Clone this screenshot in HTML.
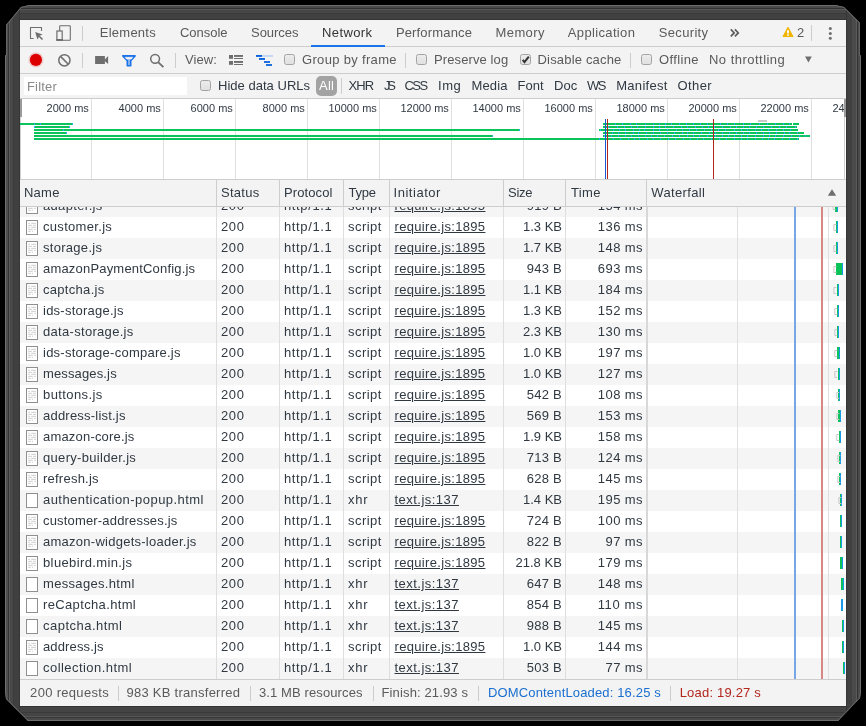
<!DOCTYPE html>
<html><head><meta charset="utf-8">
<style>
*{margin:0;padding:0;box-sizing:border-box}
html,body{width:866px;height:726px;overflow:hidden;background:#000}
body{position:relative;font-family:"Liberation Sans",sans-serif;font-size:13px;color:#303942}
.a{position:absolute;white-space:nowrap}
#wrap{position:absolute;left:0;top:0;width:866px;height:726px;will-change:transform}
#ov{position:absolute;left:0;top:0}
</style></head><body><div id="wrap">

<svg class="a" style="left:0;top:0" width="866" height="726" viewBox="0 0 866 726"><defs><clipPath id="fc"><polygon points="21,7 25,6 31,5 835,5 844,7 860,23 860,55 861,56 861,690 860,698 838,721 28,721 6,699 5,690 5,56 6,55 6,25"/></clipPath></defs><g clip-path="url(#fc)"><rect x="0" y="0" width="866" height="726" fill="#424242"/><rect x="0" y="5" width="866" height="1" fill="#7d7d7d"/><rect x="0" y="6" width="866" height="2" fill="#4a4a4a"/><rect x="0" y="8" width="866" height="1" fill="#343434"/><rect x="0" y="9" width="866" height="1" fill="#565656"/><rect x="0" y="10" width="866" height="3" fill="#474747"/><rect x="0" y="13" width="866" height="1" fill="#3b3b3b"/><rect x="0" y="14" width="866" height="5" fill="#414141"/><rect x="0" y="19" width="866" height="1" fill="#353535"/><rect x="0" y="706" width="866" height="1" fill="#333333"/><rect x="0" y="707" width="866" height="5" fill="#444444"/><rect x="0" y="712" width="866" height="1" fill="#3a3a3a"/><rect x="0" y="713" width="866" height="3" fill="#444444"/><rect x="0" y="716" width="866" height="1" fill="#555555"/><rect x="0" y="717" width="866" height="1" fill="#383838"/><rect x="0" y="718" width="866" height="2" fill="#484848"/><rect x="0" y="720" width="866" height="1" fill="#7a7a7a"/><rect x="0" y="0" width="6" height="726" fill="#858585"/><rect x="6" y="0" width="2" height="726" fill="#4f4f4f"/><rect x="8" y="0" width="1" height="726" fill="#333333"/><rect x="9" y="0" width="1" height="726" fill="#5a5a5a"/><rect x="10" y="0" width="3" height="726" fill="#484848"/><rect x="13" y="0" width="1" height="726" fill="#3c3c3c"/><rect x="14" y="0" width="5" height="726" fill="#404040"/><rect x="19" y="0" width="1" height="726" fill="#363636"/><rect x="846" y="0" width="1" height="726" fill="#363636"/><rect x="847" y="0" width="5" height="726" fill="#404040"/><rect x="852" y="0" width="4" height="726" fill="#4a4a4a"/><rect x="856" y="0" width="1" height="726" fill="#5a5a5a"/><rect x="857" y="0" width="1" height="726" fill="#333333"/><rect x="858" y="0" width="2" height="726" fill="#4a4a4a"/><rect x="860" y="0" width="6" height="726" fill="#858585"/><polygon points="21,7 25,6 31,5 835,5 844,7 860,23 860,55 861,56 861,690 860,698 838,721 28,721 6,699 5,690 5,56 6,55 6,25" fill="none" stroke="#6a6a6a" stroke-width="1.6"/></g></svg>
<div class="a" style="left:20.00px;top:20.00px;width:826.00px;height:686.00px;background:#fff;"></div>
<div class="a" style="left:20.00px;top:20.00px;width:826.00px;height:26.00px;background:#f3f3f3;"></div>
<div class="a" style="left:20.00px;top:46.00px;width:826.00px;height:1.00px;background:#cdcdcd;"></div>
<div class="a" style="left:82.00px;top:26.00px;width:1.00px;height:15.00px;background:#cdcdcd;"></div>
<div class="a" style="left:99.80px;top:20.00px;line-height:26px;color:#5a5a5a;letter-spacing:0.243px;">Elements</div>
<div class="a" style="left:180.00px;top:20.00px;line-height:26px;color:#5a5a5a;letter-spacing:-0.017px;">Console</div>
<div class="a" style="left:251.00px;top:20.00px;line-height:26px;color:#5a5a5a;letter-spacing:-0.033px;">Sources</div>
<div class="a" style="left:322.00px;top:20.00px;line-height:26px;color:#333;letter-spacing:0.400px;">Network</div>
<div class="a" style="left:395.90px;top:20.00px;line-height:26px;color:#5a5a5a;letter-spacing:0.160px;">Performance</div>
<div class="a" style="left:495.60px;top:20.00px;line-height:26px;color:#5a5a5a;letter-spacing:0.380px;">Memory</div>
<div class="a" style="left:567.80px;top:20.00px;line-height:26px;color:#5a5a5a;letter-spacing:0.350px;">Application</div>
<div class="a" style="left:658.80px;top:20.00px;line-height:26px;color:#5a5a5a;letter-spacing:0.329px;">Security</div>
<div class="a" style="left:311.00px;top:45.00px;width:74.00px;height:2.00px;background:#1a73e8;"></div>
<div class="a" style="left:797.00px;top:20.00px;line-height:26px;color:#5a5a5a;">2</div>
<div class="a" style="left:811.00px;top:25.00px;width:1.00px;height:16.00px;background:#cdcdcd;"></div>
<div class="a" style="left:20.00px;top:47.00px;width:826.00px;height:26.00px;background:#f3f3f3;"></div>
<div class="a" style="left:20.00px;top:72.50px;width:826.00px;height:1.00px;background:#cdcdcd;"></div>
<div class="a" style="left:82.00px;top:52.50px;width:1.00px;height:15.00px;background:#cdcdcd;"></div>
<div class="a" style="left:175.00px;top:52.50px;width:1.00px;height:15.00px;background:#cdcdcd;"></div>
<div class="a" style="left:185.00px;top:47.00px;line-height:26px;color:#5a5a5a;letter-spacing:0.075px;">View:</div>
<div class="a" style="left:284px;top:54px;width:10.5px;height:10.5px;border:1px solid #a3a3a3;border-radius:2.5px;background:linear-gradient(#ececec,#e0e0e0)"></div>
<div class="a" style="left:302.00px;top:47.00px;line-height:26px;color:#5a5a5a;letter-spacing:0.323px;">Group by frame</div>
<div class="a" style="left:405.00px;top:52.50px;width:1.00px;height:15.00px;background:#cdcdcd;"></div>
<div class="a" style="left:416.3px;top:54px;width:10.5px;height:10.5px;border:1px solid #a3a3a3;border-radius:2.5px;background:linear-gradient(#ececec,#e0e0e0)"></div>
<div class="a" style="left:434.00px;top:47.00px;line-height:26px;color:#5a5a5a;letter-spacing:0.109px;">Preserve log</div>
<div class="a" style="left:520.4px;top:54px;width:10.5px;height:10.5px;border:1px solid #a3a3a3;border-radius:2.5px;background:linear-gradient(#ececec,#e0e0e0)"></div>
<div class="a" style="left:537.50px;top:47.00px;line-height:26px;color:#5a5a5a;letter-spacing:0.183px;">Disable cache</div>
<div class="a" style="left:630.00px;top:52.50px;width:1.00px;height:15.00px;background:#cdcdcd;"></div>
<div class="a" style="left:641.3px;top:54px;width:10.5px;height:10.5px;border:1px solid #a3a3a3;border-radius:2.5px;background:linear-gradient(#ececec,#e0e0e0)"></div>
<div class="a" style="left:659.00px;top:47.00px;line-height:26px;color:#5a5a5a;letter-spacing:0.350px;">Offline</div>
<div class="a" style="left:709.00px;top:47.00px;line-height:26px;color:#5a5a5a;letter-spacing:0.475px;">No throttling</div>
<div class="a" style="left:20.00px;top:73.50px;width:826.00px;height:25.00px;background:#f3f3f3;"></div>
<div class="a" style="left:20.00px;top:98.00px;width:826.00px;height:1.00px;background:#cdcdcd;"></div>
<div class="a" style="left:24.00px;top:77.00px;width:163.00px;height:18.00px;background:#fff;"></div>
<div class="a" style="left:27.00px;top:74.20px;line-height:26px;color:#8a8a8a;letter-spacing:0.180px;">Filter</div>
<div class="a" style="left:200.3px;top:80px;width:10.5px;height:10.5px;border:1px solid #a3a3a3;border-radius:2.5px;background:linear-gradient(#ececec,#e0e0e0)"></div>
<div class="a" style="left:218.00px;top:73.00px;line-height:26px;color:#303942;letter-spacing:0.023px;">Hide data URLs</div>
<div class="a" style="left:316.30px;top:76.00px;width:20.70px;height:19.70px;background:#a3a3a3;border-radius:5px;"></div>
<div class="a" style="left:319.00px;top:73.00px;line-height:26px;color:#fff;letter-spacing:0.250px;">All</div>
<div class="a" style="left:341.30px;top:78.00px;width:1.00px;height:15.70px;background:#cdcdcd;"></div>
<div class="a" style="left:348.50px;top:73.00px;line-height:26px;color:#303942;letter-spacing:-0.900px;">XHR</div>
<div class="a" style="left:384.00px;top:73.00px;line-height:26px;color:#303942;letter-spacing:-3.300px;">JS</div>
<div class="a" style="left:404.50px;top:73.00px;line-height:26px;color:#303942;letter-spacing:-1.550px;">CSS</div>
<div class="a" style="left:438.00px;top:73.00px;line-height:26px;color:#303942;letter-spacing:0.550px;">Img</div>
<div class="a" style="left:471.50px;top:73.00px;line-height:26px;color:#303942;letter-spacing:0.125px;">Media</div>
<div class="a" style="left:517.50px;top:73.00px;line-height:26px;color:#303942;letter-spacing:0.033px;">Font</div>
<div class="a" style="left:554.00px;top:73.00px;line-height:26px;color:#303942;letter-spacing:0.050px;">Doc</div>
<div class="a" style="left:587.00px;top:73.00px;line-height:26px;color:#303942;letter-spacing:-1.400px;">WS</div>
<div class="a" style="left:616.20px;top:73.00px;line-height:26px;color:#303942;letter-spacing:0.300px;">Manifest</div>
<div class="a" style="left:677.50px;top:73.00px;line-height:26px;color:#303942;letter-spacing:0.400px;">Other</div>
<div class="a" style="left:91.00px;top:99.00px;width:1.00px;height:80.00px;background:#e0e0e0;"></div>
<div class="a" style="left:20px;top:99px;width:826px;height:20px;overflow:hidden"><div class="a" style="right:757.2px;top:2px;font-size:11px;line-height:14px;color:#303942">2000 ms</div></div>
<div class="a" style="left:163.00px;top:99.00px;width:1.00px;height:80.00px;background:#e0e0e0;"></div>
<div class="a" style="left:20px;top:99px;width:826px;height:20px;overflow:hidden"><div class="a" style="right:685.2px;top:2px;font-size:11px;line-height:14px;color:#303942">4000 ms</div></div>
<div class="a" style="left:235.00px;top:99.00px;width:1.00px;height:80.00px;background:#e0e0e0;"></div>
<div class="a" style="left:20px;top:99px;width:826px;height:20px;overflow:hidden"><div class="a" style="right:613.2px;top:2px;font-size:11px;line-height:14px;color:#303942">6000 ms</div></div>
<div class="a" style="left:307.00px;top:99.00px;width:1.00px;height:80.00px;background:#e0e0e0;"></div>
<div class="a" style="left:20px;top:99px;width:826px;height:20px;overflow:hidden"><div class="a" style="right:541.2px;top:2px;font-size:11px;line-height:14px;color:#303942">8000 ms</div></div>
<div class="a" style="left:379.00px;top:99.00px;width:1.00px;height:80.00px;background:#e0e0e0;"></div>
<div class="a" style="left:20px;top:99px;width:826px;height:20px;overflow:hidden"><div class="a" style="right:469.2px;top:2px;font-size:11px;line-height:14px;color:#303942">10000 ms</div></div>
<div class="a" style="left:451.00px;top:99.00px;width:1.00px;height:80.00px;background:#e0e0e0;"></div>
<div class="a" style="left:20px;top:99px;width:826px;height:20px;overflow:hidden"><div class="a" style="right:397.2px;top:2px;font-size:11px;line-height:14px;color:#303942">12000 ms</div></div>
<div class="a" style="left:523.00px;top:99.00px;width:1.00px;height:80.00px;background:#e0e0e0;"></div>
<div class="a" style="left:20px;top:99px;width:826px;height:20px;overflow:hidden"><div class="a" style="right:325.2px;top:2px;font-size:11px;line-height:14px;color:#303942">14000 ms</div></div>
<div class="a" style="left:595.00px;top:99.00px;width:1.00px;height:80.00px;background:#e0e0e0;"></div>
<div class="a" style="left:20px;top:99px;width:826px;height:20px;overflow:hidden"><div class="a" style="right:253.2px;top:2px;font-size:11px;line-height:14px;color:#303942">16000 ms</div></div>
<div class="a" style="left:667.00px;top:99.00px;width:1.00px;height:80.00px;background:#e0e0e0;"></div>
<div class="a" style="left:20px;top:99px;width:826px;height:20px;overflow:hidden"><div class="a" style="right:181.2px;top:2px;font-size:11px;line-height:14px;color:#303942">18000 ms</div></div>
<div class="a" style="left:739.00px;top:99.00px;width:1.00px;height:80.00px;background:#e0e0e0;"></div>
<div class="a" style="left:20px;top:99px;width:826px;height:20px;overflow:hidden"><div class="a" style="right:109.2px;top:2px;font-size:11px;line-height:14px;color:#303942">20000 ms</div></div>
<div class="a" style="left:811.00px;top:99.00px;width:1.00px;height:80.00px;background:#e0e0e0;"></div>
<div class="a" style="left:20px;top:99px;width:826px;height:20px;overflow:hidden"><div class="a" style="right:37.2px;top:2px;font-size:11px;line-height:14px;color:#303942">22000 ms</div></div>
<div class="a" style="left:20px;top:99px;width:826px;height:20px;overflow:hidden"><div class="a" style="right:-34.8px;top:2px;font-size:11px;line-height:14px;color:#303942">24000 ms</div></div>
<div class="a" style="left:20.00px;top:99.00px;width:2.00px;height:18.00px;background:#9a9a9a;"></div>
<div class="a" style="left:20.00px;top:117.00px;width:1.00px;height:62.00px;background:#d0d0d0;"></div>
<div class="a" style="left:843.50px;top:99.00px;width:2.50px;height:18.00px;background:#9a9a9a;"></div>
<div class="a" style="left:844.00px;top:117.00px;width:1.00px;height:62.00px;background:#d0d0d0;"></div>
<div class="a" style="left:20.00px;top:179.00px;width:826.00px;height:1.00px;background:#cdcdcd;"></div>
<div class="a" style="left:20.00px;top:122.80px;width:52.70px;height:2.20px;background:#0ac35a;"></div>
<div class="a" style="left:34.30px;top:125.80px;width:35.40px;height:2.20px;background:#0ac35a;"></div>
<div class="a" style="left:34.30px;top:128.80px;width:486.20px;height:2.20px;background:#0ac35a;"></div>
<div class="a" style="left:34.30px;top:131.80px;width:32.60px;height:2.20px;background:#0ac35a;"></div>
<div class="a" style="left:34.30px;top:134.80px;width:458.40px;height:2.20px;background:#0ac35a;"></div>
<div class="a" style="left:34.30px;top:137.80px;width:764.70px;height:2.20px;background:#0ac35a;"></div>
<div class="a" style="left:602.50px;top:122.80px;width:189.10px;height:2.20px;background:#0ac35a;"></div>
<div class="a" style="left:793.00px;top:122.80px;width:6.40px;height:2.20px;background:#0ac35a;"></div>
<div class="a" style="left:602.50px;top:125.80px;width:194.30px;height:2.20px;background:#0ac35a;"></div>
<div class="a" style="left:599.30px;top:128.80px;width:198.60px;height:2.20px;background:#0ac35a;"></div>
<div class="a" style="left:602.50px;top:131.80px;width:201.40px;height:2.20px;background:#0ac35a;"></div>
<div class="a" style="left:602.50px;top:134.80px;width:207.40px;height:2.20px;background:#0ac35a;"></div>
<div class="a" style="left:71.50px;top:122.80px;width:1.20px;height:2.20px;background:#2bb3e6;"></div>
<div class="a" style="left:68.50px;top:125.80px;width:1.20px;height:2.20px;background:#2bb3e6;"></div>
<div class="a" style="left:519.30px;top:128.80px;width:1.20px;height:2.20px;background:#2bb3e6;"></div>
<div class="a" style="left:65.70px;top:131.80px;width:1.20px;height:2.20px;background:#2bb3e6;"></div>
<div class="a" style="left:491.50px;top:134.80px;width:1.20px;height:2.20px;background:#2bb3e6;"></div>
<div class="a" style="left:599.43px;top:137.80px;width:1.00px;height:2.20px;background:#2bb3e6;"></div>
<div class="a" style="left:606.56px;top:137.80px;width:1.00px;height:2.20px;background:#2bb3e6;"></div>
<div class="a" style="left:613.17px;top:137.80px;width:1.00px;height:2.20px;background:#2bb3e6;"></div>
<div class="a" style="left:620.48px;top:137.80px;width:1.00px;height:2.20px;background:#2bb3e6;"></div>
<div class="a" style="left:627.86px;top:137.80px;width:1.00px;height:2.20px;background:#2bb3e6;"></div>
<div class="a" style="left:633.56px;top:137.80px;width:1.00px;height:2.20px;background:#2bb3e6;"></div>
<div class="a" style="left:639.10px;top:137.80px;width:1.00px;height:2.20px;background:#2bb3e6;"></div>
<div class="a" style="left:647.11px;top:137.80px;width:1.00px;height:2.20px;background:#2bb3e6;"></div>
<div class="a" style="left:653.39px;top:137.80px;width:1.00px;height:2.20px;background:#2bb3e6;"></div>
<div class="a" style="left:659.59px;top:137.80px;width:1.00px;height:2.20px;background:#2bb3e6;"></div>
<div class="a" style="left:668.08px;top:137.80px;width:1.00px;height:2.20px;background:#2bb3e6;"></div>
<div class="a" style="left:674.99px;top:137.80px;width:1.00px;height:2.20px;background:#2bb3e6;"></div>
<div class="a" style="left:683.00px;top:137.80px;width:1.00px;height:2.20px;background:#2bb3e6;"></div>
<div class="a" style="left:689.92px;top:137.80px;width:1.00px;height:2.20px;background:#2bb3e6;"></div>
<div class="a" style="left:697.34px;top:137.80px;width:1.00px;height:2.20px;background:#2bb3e6;"></div>
<div class="a" style="left:703.29px;top:137.80px;width:1.00px;height:2.20px;background:#2bb3e6;"></div>
<div class="a" style="left:710.70px;top:137.80px;width:1.00px;height:2.20px;background:#2bb3e6;"></div>
<div class="a" style="left:718.80px;top:137.80px;width:1.00px;height:2.20px;background:#2bb3e6;"></div>
<div class="a" style="left:725.87px;top:137.80px;width:1.00px;height:2.20px;background:#2bb3e6;"></div>
<div class="a" style="left:733.60px;top:137.80px;width:1.00px;height:2.20px;background:#2bb3e6;"></div>
<div class="a" style="left:741.11px;top:137.80px;width:1.00px;height:2.20px;background:#2bb3e6;"></div>
<div class="a" style="left:746.80px;top:137.80px;width:1.00px;height:2.20px;background:#2bb3e6;"></div>
<div class="a" style="left:754.58px;top:137.80px;width:1.00px;height:2.20px;background:#2bb3e6;"></div>
<div class="a" style="left:761.85px;top:137.80px;width:1.00px;height:2.20px;background:#2bb3e6;"></div>
<div class="a" style="left:768.25px;top:137.80px;width:1.00px;height:2.20px;background:#2bb3e6;"></div>
<div class="a" style="left:773.85px;top:137.80px;width:1.00px;height:2.20px;background:#2bb3e6;"></div>
<div class="a" style="left:781.94px;top:137.80px;width:1.00px;height:2.20px;background:#2bb3e6;"></div>
<div class="a" style="left:788.86px;top:137.80px;width:1.00px;height:2.20px;background:#2bb3e6;"></div>
<div class="a" style="left:796.52px;top:137.80px;width:1.00px;height:2.20px;background:#2bb3e6;"></div>
<div class="a" style="left:606.78px;top:122.80px;width:1.00px;height:2.20px;background:#2bb3e6;"></div>
<div class="a" style="left:615.05px;top:122.80px;width:1.00px;height:2.20px;background:#2bb3e6;"></div>
<div class="a" style="left:621.73px;top:122.80px;width:1.00px;height:2.20px;background:#2bb3e6;"></div>
<div class="a" style="left:629.64px;top:122.80px;width:1.00px;height:2.20px;background:#2bb3e6;"></div>
<div class="a" style="left:636.47px;top:122.80px;width:1.00px;height:2.20px;background:#2bb3e6;"></div>
<div class="a" style="left:644.78px;top:122.80px;width:1.00px;height:2.20px;background:#2bb3e6;"></div>
<div class="a" style="left:652.91px;top:122.80px;width:1.00px;height:2.20px;background:#2bb3e6;"></div>
<div class="a" style="left:658.71px;top:122.80px;width:1.00px;height:2.20px;background:#2bb3e6;"></div>
<div class="a" style="left:664.61px;top:122.80px;width:1.00px;height:2.20px;background:#2bb3e6;"></div>
<div class="a" style="left:670.76px;top:122.80px;width:1.00px;height:2.20px;background:#2bb3e6;"></div>
<div class="a" style="left:679.16px;top:122.80px;width:1.00px;height:2.20px;background:#2bb3e6;"></div>
<div class="a" style="left:685.97px;top:122.80px;width:1.00px;height:2.20px;background:#2bb3e6;"></div>
<div class="a" style="left:693.35px;top:122.80px;width:1.00px;height:2.20px;background:#2bb3e6;"></div>
<div class="a" style="left:699.75px;top:122.80px;width:1.00px;height:2.20px;background:#2bb3e6;"></div>
<div class="a" style="left:706.77px;top:122.80px;width:1.00px;height:2.20px;background:#2bb3e6;"></div>
<div class="a" style="left:713.43px;top:122.80px;width:1.00px;height:2.20px;background:#2bb3e6;"></div>
<div class="a" style="left:719.98px;top:122.80px;width:1.00px;height:2.20px;background:#2bb3e6;"></div>
<div class="a" style="left:727.24px;top:122.80px;width:1.00px;height:2.20px;background:#2bb3e6;"></div>
<div class="a" style="left:734.49px;top:122.80px;width:1.00px;height:2.20px;background:#2bb3e6;"></div>
<div class="a" style="left:742.70px;top:122.80px;width:1.00px;height:2.20px;background:#2bb3e6;"></div>
<div class="a" style="left:750.25px;top:122.80px;width:1.00px;height:2.20px;background:#2bb3e6;"></div>
<div class="a" style="left:758.54px;top:122.80px;width:1.00px;height:2.20px;background:#2bb3e6;"></div>
<div class="a" style="left:766.61px;top:122.80px;width:1.00px;height:2.20px;background:#2bb3e6;"></div>
<div class="a" style="left:775.08px;top:122.80px;width:1.00px;height:2.20px;background:#2bb3e6;"></div>
<div class="a" style="left:782.59px;top:122.80px;width:1.00px;height:2.20px;background:#2bb3e6;"></div>
<div class="a" style="left:788.58px;top:122.80px;width:1.00px;height:2.20px;background:#2bb3e6;"></div>
<div class="a" style="left:608.29px;top:125.80px;width:1.00px;height:2.20px;background:#2bb3e6;"></div>
<div class="a" style="left:616.50px;top:125.80px;width:1.00px;height:2.20px;background:#2bb3e6;"></div>
<div class="a" style="left:623.71px;top:125.80px;width:1.00px;height:2.20px;background:#2bb3e6;"></div>
<div class="a" style="left:631.35px;top:125.80px;width:1.00px;height:2.20px;background:#2bb3e6;"></div>
<div class="a" style="left:637.48px;top:125.80px;width:1.00px;height:2.20px;background:#2bb3e6;"></div>
<div class="a" style="left:645.48px;top:125.80px;width:1.00px;height:2.20px;background:#2bb3e6;"></div>
<div class="a" style="left:652.70px;top:125.80px;width:1.00px;height:2.20px;background:#2bb3e6;"></div>
<div class="a" style="left:659.05px;top:125.80px;width:1.00px;height:2.20px;background:#2bb3e6;"></div>
<div class="a" style="left:664.74px;top:125.80px;width:1.00px;height:2.20px;background:#2bb3e6;"></div>
<div class="a" style="left:672.81px;top:125.80px;width:1.00px;height:2.20px;background:#2bb3e6;"></div>
<div class="a" style="left:681.28px;top:125.80px;width:1.00px;height:2.20px;background:#2bb3e6;"></div>
<div class="a" style="left:687.04px;top:125.80px;width:1.00px;height:2.20px;background:#2bb3e6;"></div>
<div class="a" style="left:694.94px;top:125.80px;width:1.00px;height:2.20px;background:#2bb3e6;"></div>
<div class="a" style="left:701.67px;top:125.80px;width:1.00px;height:2.20px;background:#2bb3e6;"></div>
<div class="a" style="left:707.63px;top:125.80px;width:1.00px;height:2.20px;background:#2bb3e6;"></div>
<div class="a" style="left:714.01px;top:125.80px;width:1.00px;height:2.20px;background:#2bb3e6;"></div>
<div class="a" style="left:721.82px;top:125.80px;width:1.00px;height:2.20px;background:#2bb3e6;"></div>
<div class="a" style="left:729.93px;top:125.80px;width:1.00px;height:2.20px;background:#2bb3e6;"></div>
<div class="a" style="left:735.57px;top:125.80px;width:1.00px;height:2.20px;background:#2bb3e6;"></div>
<div class="a" style="left:742.91px;top:125.80px;width:1.00px;height:2.20px;background:#2bb3e6;"></div>
<div class="a" style="left:748.54px;top:125.80px;width:1.00px;height:2.20px;background:#2bb3e6;"></div>
<div class="a" style="left:756.20px;top:125.80px;width:1.00px;height:2.20px;background:#2bb3e6;"></div>
<div class="a" style="left:762.69px;top:125.80px;width:1.00px;height:2.20px;background:#2bb3e6;"></div>
<div class="a" style="left:770.84px;top:125.80px;width:1.00px;height:2.20px;background:#2bb3e6;"></div>
<div class="a" style="left:779.28px;top:125.80px;width:1.00px;height:2.20px;background:#2bb3e6;"></div>
<div class="a" style="left:786.29px;top:125.80px;width:1.00px;height:2.20px;background:#2bb3e6;"></div>
<div class="a" style="left:794.79px;top:125.80px;width:1.00px;height:2.20px;background:#2bb3e6;"></div>
<div class="a" style="left:599.76px;top:128.80px;width:1.00px;height:2.20px;background:#2bb3e6;"></div>
<div class="a" style="left:607.06px;top:128.80px;width:1.00px;height:2.20px;background:#2bb3e6;"></div>
<div class="a" style="left:612.66px;top:128.80px;width:1.00px;height:2.20px;background:#2bb3e6;"></div>
<div class="a" style="left:618.75px;top:128.80px;width:1.00px;height:2.20px;background:#2bb3e6;"></div>
<div class="a" style="left:625.47px;top:128.80px;width:1.00px;height:2.20px;background:#2bb3e6;"></div>
<div class="a" style="left:632.80px;top:128.80px;width:1.00px;height:2.20px;background:#2bb3e6;"></div>
<div class="a" style="left:638.77px;top:128.80px;width:1.00px;height:2.20px;background:#2bb3e6;"></div>
<div class="a" style="left:644.40px;top:128.80px;width:1.00px;height:2.20px;background:#2bb3e6;"></div>
<div class="a" style="left:652.50px;top:128.80px;width:1.00px;height:2.20px;background:#2bb3e6;"></div>
<div class="a" style="left:658.94px;top:128.80px;width:1.00px;height:2.20px;background:#2bb3e6;"></div>
<div class="a" style="left:667.32px;top:128.80px;width:1.00px;height:2.20px;background:#2bb3e6;"></div>
<div class="a" style="left:675.51px;top:128.80px;width:1.00px;height:2.20px;background:#2bb3e6;"></div>
<div class="a" style="left:682.14px;top:128.80px;width:1.00px;height:2.20px;background:#2bb3e6;"></div>
<div class="a" style="left:689.02px;top:128.80px;width:1.00px;height:2.20px;background:#2bb3e6;"></div>
<div class="a" style="left:696.08px;top:128.80px;width:1.00px;height:2.20px;background:#2bb3e6;"></div>
<div class="a" style="left:703.52px;top:128.80px;width:1.00px;height:2.20px;background:#2bb3e6;"></div>
<div class="a" style="left:710.80px;top:128.80px;width:1.00px;height:2.20px;background:#2bb3e6;"></div>
<div class="a" style="left:717.98px;top:128.80px;width:1.00px;height:2.20px;background:#2bb3e6;"></div>
<div class="a" style="left:725.34px;top:128.80px;width:1.00px;height:2.20px;background:#2bb3e6;"></div>
<div class="a" style="left:733.66px;top:128.80px;width:1.00px;height:2.20px;background:#2bb3e6;"></div>
<div class="a" style="left:740.68px;top:128.80px;width:1.00px;height:2.20px;background:#2bb3e6;"></div>
<div class="a" style="left:747.48px;top:128.80px;width:1.00px;height:2.20px;background:#2bb3e6;"></div>
<div class="a" style="left:755.14px;top:128.80px;width:1.00px;height:2.20px;background:#2bb3e6;"></div>
<div class="a" style="left:761.35px;top:128.80px;width:1.00px;height:2.20px;background:#2bb3e6;"></div>
<div class="a" style="left:767.75px;top:128.80px;width:1.00px;height:2.20px;background:#2bb3e6;"></div>
<div class="a" style="left:776.19px;top:128.80px;width:1.00px;height:2.20px;background:#2bb3e6;"></div>
<div class="a" style="left:783.25px;top:128.80px;width:1.00px;height:2.20px;background:#2bb3e6;"></div>
<div class="a" style="left:790.40px;top:128.80px;width:1.00px;height:2.20px;background:#2bb3e6;"></div>
<div class="a" style="left:604.99px;top:131.80px;width:1.00px;height:2.20px;background:#2bb3e6;"></div>
<div class="a" style="left:612.23px;top:131.80px;width:1.00px;height:2.20px;background:#2bb3e6;"></div>
<div class="a" style="left:617.79px;top:131.80px;width:1.00px;height:2.20px;background:#2bb3e6;"></div>
<div class="a" style="left:625.14px;top:131.80px;width:1.00px;height:2.20px;background:#2bb3e6;"></div>
<div class="a" style="left:632.54px;top:131.80px;width:1.00px;height:2.20px;background:#2bb3e6;"></div>
<div class="a" style="left:638.22px;top:131.80px;width:1.00px;height:2.20px;background:#2bb3e6;"></div>
<div class="a" style="left:645.60px;top:131.80px;width:1.00px;height:2.20px;background:#2bb3e6;"></div>
<div class="a" style="left:652.50px;top:131.80px;width:1.00px;height:2.20px;background:#2bb3e6;"></div>
<div class="a" style="left:660.03px;top:131.80px;width:1.00px;height:2.20px;background:#2bb3e6;"></div>
<div class="a" style="left:666.59px;top:131.80px;width:1.00px;height:2.20px;background:#2bb3e6;"></div>
<div class="a" style="left:674.21px;top:131.80px;width:1.00px;height:2.20px;background:#2bb3e6;"></div>
<div class="a" style="left:681.93px;top:131.80px;width:1.00px;height:2.20px;background:#2bb3e6;"></div>
<div class="a" style="left:687.49px;top:131.80px;width:1.00px;height:2.20px;background:#2bb3e6;"></div>
<div class="a" style="left:693.18px;top:131.80px;width:1.00px;height:2.20px;background:#2bb3e6;"></div>
<div class="a" style="left:700.70px;top:131.80px;width:1.00px;height:2.20px;background:#2bb3e6;"></div>
<div class="a" style="left:709.09px;top:131.80px;width:1.00px;height:2.20px;background:#2bb3e6;"></div>
<div class="a" style="left:715.35px;top:131.80px;width:1.00px;height:2.20px;background:#2bb3e6;"></div>
<div class="a" style="left:722.22px;top:131.80px;width:1.00px;height:2.20px;background:#2bb3e6;"></div>
<div class="a" style="left:729.49px;top:131.80px;width:1.00px;height:2.20px;background:#2bb3e6;"></div>
<div class="a" style="left:735.95px;top:131.80px;width:1.00px;height:2.20px;background:#2bb3e6;"></div>
<div class="a" style="left:742.55px;top:131.80px;width:1.00px;height:2.20px;background:#2bb3e6;"></div>
<div class="a" style="left:748.98px;top:131.80px;width:1.00px;height:2.20px;background:#2bb3e6;"></div>
<div class="a" style="left:755.59px;top:131.80px;width:1.00px;height:2.20px;background:#2bb3e6;"></div>
<div class="a" style="left:762.88px;top:131.80px;width:1.00px;height:2.20px;background:#2bb3e6;"></div>
<div class="a" style="left:769.28px;top:131.80px;width:1.00px;height:2.20px;background:#2bb3e6;"></div>
<div class="a" style="left:775.91px;top:131.80px;width:1.00px;height:2.20px;background:#2bb3e6;"></div>
<div class="a" style="left:783.73px;top:131.80px;width:1.00px;height:2.20px;background:#2bb3e6;"></div>
<div class="a" style="left:789.31px;top:131.80px;width:1.00px;height:2.20px;background:#2bb3e6;"></div>
<div class="a" style="left:796.52px;top:131.80px;width:1.00px;height:2.20px;background:#2bb3e6;"></div>
<div class="a" style="left:604.36px;top:134.80px;width:1.00px;height:2.20px;background:#2bb3e6;"></div>
<div class="a" style="left:610.53px;top:134.80px;width:1.00px;height:2.20px;background:#2bb3e6;"></div>
<div class="a" style="left:618.44px;top:134.80px;width:1.00px;height:2.20px;background:#2bb3e6;"></div>
<div class="a" style="left:624.66px;top:134.80px;width:1.00px;height:2.20px;background:#2bb3e6;"></div>
<div class="a" style="left:630.72px;top:134.80px;width:1.00px;height:2.20px;background:#2bb3e6;"></div>
<div class="a" style="left:637.52px;top:134.80px;width:1.00px;height:2.20px;background:#2bb3e6;"></div>
<div class="a" style="left:645.12px;top:134.80px;width:1.00px;height:2.20px;background:#2bb3e6;"></div>
<div class="a" style="left:650.92px;top:134.80px;width:1.00px;height:2.20px;background:#2bb3e6;"></div>
<div class="a" style="left:657.39px;top:134.80px;width:1.00px;height:2.20px;background:#2bb3e6;"></div>
<div class="a" style="left:663.89px;top:134.80px;width:1.00px;height:2.20px;background:#2bb3e6;"></div>
<div class="a" style="left:671.89px;top:134.80px;width:1.00px;height:2.20px;background:#2bb3e6;"></div>
<div class="a" style="left:678.71px;top:134.80px;width:1.00px;height:2.20px;background:#2bb3e6;"></div>
<div class="a" style="left:686.77px;top:134.80px;width:1.00px;height:2.20px;background:#2bb3e6;"></div>
<div class="a" style="left:692.78px;top:134.80px;width:1.00px;height:2.20px;background:#2bb3e6;"></div>
<div class="a" style="left:699.29px;top:134.80px;width:1.00px;height:2.20px;background:#2bb3e6;"></div>
<div class="a" style="left:706.74px;top:134.80px;width:1.00px;height:2.20px;background:#2bb3e6;"></div>
<div class="a" style="left:714.90px;top:134.80px;width:1.00px;height:2.20px;background:#2bb3e6;"></div>
<div class="a" style="left:721.75px;top:134.80px;width:1.00px;height:2.20px;background:#2bb3e6;"></div>
<div class="a" style="left:727.92px;top:134.80px;width:1.00px;height:2.20px;background:#2bb3e6;"></div>
<div class="a" style="left:733.79px;top:134.80px;width:1.00px;height:2.20px;background:#2bb3e6;"></div>
<div class="a" style="left:740.88px;top:134.80px;width:1.00px;height:2.20px;background:#2bb3e6;"></div>
<div class="a" style="left:746.95px;top:134.80px;width:1.00px;height:2.20px;background:#2bb3e6;"></div>
<div class="a" style="left:754.87px;top:134.80px;width:1.00px;height:2.20px;background:#2bb3e6;"></div>
<div class="a" style="left:762.88px;top:134.80px;width:1.00px;height:2.20px;background:#2bb3e6;"></div>
<div class="a" style="left:768.93px;top:134.80px;width:1.00px;height:2.20px;background:#2bb3e6;"></div>
<div class="a" style="left:775.27px;top:134.80px;width:1.00px;height:2.20px;background:#2bb3e6;"></div>
<div class="a" style="left:783.19px;top:134.80px;width:1.00px;height:2.20px;background:#2bb3e6;"></div>
<div class="a" style="left:790.62px;top:134.80px;width:1.00px;height:2.20px;background:#2bb3e6;"></div>
<div class="a" style="left:798.54px;top:134.80px;width:1.00px;height:2.20px;background:#2bb3e6;"></div>
<div class="a" style="left:805.07px;top:134.80px;width:1.00px;height:2.20px;background:#2bb3e6;"></div>
<div class="a" style="left:758.30px;top:120.00px;width:8.50px;height:2.00px;background:#c8c8c8;"></div>
<div class="a" style="left:34.00px;top:122.80px;width:1.00px;height:2.20px;background:#2bb3e6;"></div>
<div class="a" style="left:40.30px;top:122.80px;width:1.00px;height:2.20px;background:#2bb3e6;"></div>
<div class="a" style="left:34.30px;top:125.80px;width:1.00px;height:2.20px;background:#2bb3e6;"></div>
<div class="a" style="left:62.80px;top:128.80px;width:1.00px;height:2.20px;background:#2bb3e6;"></div>
<div class="a" style="left:605.00px;top:119.00px;width:1.00px;height:60.00px;background:#1b58d6;"></div>
<div class="a" style="left:607.20px;top:119.00px;width:1.20px;height:60.00px;background:#b3261e;"></div>
<div class="a" style="left:713.20px;top:119.00px;width:1.20px;height:60.00px;background:#b3261e;"></div>
<div class="a" style="left:20.00px;top:196.00px;width:826.00px;height:21.00px;background:#f5f5f5;"></div>
<div class="a" style="left:43.00px;top:195.00px;line-height:21px;color:#303942;letter-spacing:0.322px;">adapter.js</div>
<div class="a" style="left:221.00px;top:195.00px;line-height:21px;color:#303942;letter-spacing:0.600px;">200</div>
<div class="a" style="left:284.00px;top:195.00px;line-height:21px;color:#303942;letter-spacing:0.629px;">http/1.1</div>
<div class="a" style="left:348.00px;top:195.00px;line-height:21px;color:#303942;letter-spacing:0.460px;">script</div>
<div class="a" style="left:394.50px;top:195.00px;line-height:21px;color:#303942;letter-spacing:0.329px;text-decoration:underline;">require.js:1895</div>
<div class="a" style="right:304.00px;top:195.00px;line-height:21px;color:#303942;letter-spacing:0.250px;">919 B</div>
<div class="a" style="right:223.00px;top:195.00px;line-height:21px;color:#303942;letter-spacing:0.420px;">154 ms</div>
<div class="a" style="left:835.10px;top:200.00px;width:1.50px;height:12.00px;background:#0ac35a;"></div>
<div class="a" style="left:836.60px;top:200.00px;width:1.20px;height:12.00px;background:#1a9be8;"></div>
<div class="a" style="left:20.00px;top:217.00px;width:826.00px;height:21.00px;background:#fff;"></div>
<div class="a" style="left:43.00px;top:216.00px;line-height:21px;color:#303942;letter-spacing:0.310px;">customer.js</div>
<div class="a" style="left:221.00px;top:216.00px;line-height:21px;color:#303942;letter-spacing:0.600px;">200</div>
<div class="a" style="left:284.00px;top:216.00px;line-height:21px;color:#303942;letter-spacing:0.629px;">http/1.1</div>
<div class="a" style="left:348.00px;top:216.00px;line-height:21px;color:#303942;letter-spacing:0.460px;">script</div>
<div class="a" style="left:394.50px;top:216.00px;line-height:21px;color:#303942;letter-spacing:0.329px;text-decoration:underline;">require.js:1895</div>
<div class="a" style="right:304.00px;top:216.00px;line-height:21px;color:#303942;letter-spacing:0.000px;">1.3 KB</div>
<div class="a" style="right:223.00px;top:216.00px;line-height:21px;color:#303942;letter-spacing:0.420px;">136 ms</div>
<div class="a" style="left:836.30px;top:221.00px;width:1.30px;height:12.00px;background:#0ac35a;"></div>
<div class="a" style="left:836.60px;top:221.00px;width:1.20px;height:12.00px;background:#1a9be8;"></div>
<div class="a" style="left:20.00px;top:238.00px;width:826.00px;height:21.00px;background:#f5f5f5;"></div>
<div class="a" style="left:43.00px;top:237.00px;line-height:21px;color:#303942;letter-spacing:0.289px;">storage.js</div>
<div class="a" style="left:221.00px;top:237.00px;line-height:21px;color:#303942;letter-spacing:0.600px;">200</div>
<div class="a" style="left:284.00px;top:237.00px;line-height:21px;color:#303942;letter-spacing:0.629px;">http/1.1</div>
<div class="a" style="left:348.00px;top:237.00px;line-height:21px;color:#303942;letter-spacing:0.460px;">script</div>
<div class="a" style="left:394.50px;top:237.00px;line-height:21px;color:#303942;letter-spacing:0.329px;text-decoration:underline;">require.js:1895</div>
<div class="a" style="right:304.00px;top:237.00px;line-height:21px;color:#303942;letter-spacing:0.000px;">1.7 KB</div>
<div class="a" style="right:223.00px;top:237.00px;line-height:21px;color:#303942;letter-spacing:0.420px;">148 ms</div>
<div class="a" style="left:836.30px;top:242.00px;width:1.30px;height:12.00px;background:#0ac35a;"></div>
<div class="a" style="left:836.60px;top:242.00px;width:1.20px;height:12.00px;background:#1a9be8;"></div>
<div class="a" style="left:20.00px;top:259.00px;width:826.00px;height:21.00px;background:#fff;"></div>
<div class="a" style="left:43.00px;top:258.00px;line-height:21px;color:#303942;letter-spacing:0.190px;">amazonPaymentConfig.js</div>
<div class="a" style="left:221.00px;top:258.00px;line-height:21px;color:#303942;letter-spacing:0.600px;">200</div>
<div class="a" style="left:284.00px;top:258.00px;line-height:21px;color:#303942;letter-spacing:0.629px;">http/1.1</div>
<div class="a" style="left:348.00px;top:258.00px;line-height:21px;color:#303942;letter-spacing:0.460px;">script</div>
<div class="a" style="left:394.50px;top:258.00px;line-height:21px;color:#303942;letter-spacing:0.329px;text-decoration:underline;">require.js:1895</div>
<div class="a" style="right:304.00px;top:258.00px;line-height:21px;color:#303942;letter-spacing:0.250px;">943 B</div>
<div class="a" style="right:223.00px;top:258.00px;line-height:21px;color:#303942;letter-spacing:0.420px;">693 ms</div>
<div class="a" style="left:836.30px;top:263.00px;width:5.70px;height:12.00px;background:#0ac35a;"></div>
<div class="a" style="left:842.00px;top:263.00px;width:1.20px;height:12.00px;background:#1a9be8;"></div>
<div class="a" style="left:20.00px;top:280.00px;width:826.00px;height:21.00px;background:#f5f5f5;"></div>
<div class="a" style="left:43.00px;top:279.00px;line-height:21px;color:#303942;letter-spacing:0.300px;">captcha.js</div>
<div class="a" style="left:221.00px;top:279.00px;line-height:21px;color:#303942;letter-spacing:0.600px;">200</div>
<div class="a" style="left:284.00px;top:279.00px;line-height:21px;color:#303942;letter-spacing:0.629px;">http/1.1</div>
<div class="a" style="left:348.00px;top:279.00px;line-height:21px;color:#303942;letter-spacing:0.460px;">script</div>
<div class="a" style="left:394.50px;top:279.00px;line-height:21px;color:#303942;letter-spacing:0.329px;text-decoration:underline;">require.js:1895</div>
<div class="a" style="right:304.00px;top:279.00px;line-height:21px;color:#303942;letter-spacing:0.000px;">1.1 KB</div>
<div class="a" style="right:223.00px;top:279.00px;line-height:21px;color:#303942;letter-spacing:0.420px;">184 ms</div>
<div class="a" style="left:837.10px;top:284.00px;width:1.30px;height:12.00px;background:#0ac35a;"></div>
<div class="a" style="left:837.90px;top:284.00px;width:1.20px;height:12.00px;background:#1a9be8;"></div>
<div class="a" style="left:20.00px;top:301.00px;width:826.00px;height:21.00px;background:#fff;"></div>
<div class="a" style="left:43.00px;top:300.00px;line-height:21px;color:#303942;letter-spacing:0.246px;">ids-storage.js</div>
<div class="a" style="left:221.00px;top:300.00px;line-height:21px;color:#303942;letter-spacing:0.600px;">200</div>
<div class="a" style="left:284.00px;top:300.00px;line-height:21px;color:#303942;letter-spacing:0.629px;">http/1.1</div>
<div class="a" style="left:348.00px;top:300.00px;line-height:21px;color:#303942;letter-spacing:0.460px;">script</div>
<div class="a" style="left:394.50px;top:300.00px;line-height:21px;color:#303942;letter-spacing:0.329px;text-decoration:underline;">require.js:1895</div>
<div class="a" style="right:304.00px;top:300.00px;line-height:21px;color:#303942;letter-spacing:0.000px;">1.3 KB</div>
<div class="a" style="right:223.00px;top:300.00px;line-height:21px;color:#303942;letter-spacing:0.420px;">152 ms</div>
<div class="a" style="left:837.10px;top:305.00px;width:1.30px;height:12.00px;background:#0ac35a;"></div>
<div class="a" style="left:837.90px;top:305.00px;width:1.20px;height:12.00px;background:#1a9be8;"></div>
<div class="a" style="left:20.00px;top:322.00px;width:826.00px;height:21.00px;background:#f5f5f5;"></div>
<div class="a" style="left:43.00px;top:321.00px;line-height:21px;color:#303942;letter-spacing:0.307px;">data-storage.js</div>
<div class="a" style="left:221.00px;top:321.00px;line-height:21px;color:#303942;letter-spacing:0.600px;">200</div>
<div class="a" style="left:284.00px;top:321.00px;line-height:21px;color:#303942;letter-spacing:0.629px;">http/1.1</div>
<div class="a" style="left:348.00px;top:321.00px;line-height:21px;color:#303942;letter-spacing:0.460px;">script</div>
<div class="a" style="left:394.50px;top:321.00px;line-height:21px;color:#303942;letter-spacing:0.329px;text-decoration:underline;">require.js:1895</div>
<div class="a" style="right:304.00px;top:321.00px;line-height:21px;color:#303942;letter-spacing:0.000px;">2.3 KB</div>
<div class="a" style="right:223.00px;top:321.00px;line-height:21px;color:#303942;letter-spacing:0.420px;">130 ms</div>
<div class="a" style="left:836.80px;top:326.00px;width:1.40px;height:12.00px;background:#0ac35a;"></div>
<div class="a" style="left:838.20px;top:326.00px;width:1.20px;height:12.00px;background:#1a9be8;"></div>
<div class="a" style="left:20.00px;top:343.00px;width:826.00px;height:21.00px;background:#fff;"></div>
<div class="a" style="left:43.00px;top:342.00px;line-height:21px;color:#303942;letter-spacing:0.252px;">ids-storage-compare.js</div>
<div class="a" style="left:221.00px;top:342.00px;line-height:21px;color:#303942;letter-spacing:0.600px;">200</div>
<div class="a" style="left:284.00px;top:342.00px;line-height:21px;color:#303942;letter-spacing:0.629px;">http/1.1</div>
<div class="a" style="left:348.00px;top:342.00px;line-height:21px;color:#303942;letter-spacing:0.460px;">script</div>
<div class="a" style="left:394.50px;top:342.00px;line-height:21px;color:#303942;letter-spacing:0.329px;text-decoration:underline;">require.js:1895</div>
<div class="a" style="right:304.00px;top:342.00px;line-height:21px;color:#303942;letter-spacing:0.000px;">1.0 KB</div>
<div class="a" style="right:223.00px;top:342.00px;line-height:21px;color:#303942;letter-spacing:0.420px;">197 ms</div>
<div class="a" style="left:836.80px;top:347.00px;width:1.80px;height:12.00px;background:#0ac35a;"></div>
<div class="a" style="left:838.60px;top:347.00px;width:1.20px;height:12.00px;background:#1a9be8;"></div>
<div class="a" style="left:20.00px;top:364.00px;width:826.00px;height:21.00px;background:#f5f5f5;"></div>
<div class="a" style="left:43.00px;top:363.00px;line-height:21px;color:#303942;letter-spacing:0.140px;">messages.js</div>
<div class="a" style="left:221.00px;top:363.00px;line-height:21px;color:#303942;letter-spacing:0.600px;">200</div>
<div class="a" style="left:284.00px;top:363.00px;line-height:21px;color:#303942;letter-spacing:0.629px;">http/1.1</div>
<div class="a" style="left:348.00px;top:363.00px;line-height:21px;color:#303942;letter-spacing:0.460px;">script</div>
<div class="a" style="left:394.50px;top:363.00px;line-height:21px;color:#303942;letter-spacing:0.329px;text-decoration:underline;">require.js:1895</div>
<div class="a" style="right:304.00px;top:363.00px;line-height:21px;color:#303942;letter-spacing:0.000px;">1.0 KB</div>
<div class="a" style="right:223.00px;top:363.00px;line-height:21px;color:#303942;letter-spacing:0.420px;">127 ms</div>
<div class="a" style="left:838.00px;top:368.00px;width:1.30px;height:12.00px;background:#0ac35a;"></div>
<div class="a" style="left:839.00px;top:368.00px;width:1.20px;height:12.00px;background:#1a9be8;"></div>
<div class="a" style="left:20.00px;top:385.00px;width:826.00px;height:21.00px;background:#fff;"></div>
<div class="a" style="left:43.00px;top:384.00px;line-height:21px;color:#303942;letter-spacing:0.400px;">buttons.js</div>
<div class="a" style="left:221.00px;top:384.00px;line-height:21px;color:#303942;letter-spacing:0.600px;">200</div>
<div class="a" style="left:284.00px;top:384.00px;line-height:21px;color:#303942;letter-spacing:0.629px;">http/1.1</div>
<div class="a" style="left:348.00px;top:384.00px;line-height:21px;color:#303942;letter-spacing:0.460px;">script</div>
<div class="a" style="left:394.50px;top:384.00px;line-height:21px;color:#303942;letter-spacing:0.329px;text-decoration:underline;">require.js:1895</div>
<div class="a" style="right:304.00px;top:384.00px;line-height:21px;color:#303942;letter-spacing:0.250px;">542 B</div>
<div class="a" style="right:223.00px;top:384.00px;line-height:21px;color:#303942;letter-spacing:0.420px;">108 ms</div>
<div class="a" style="left:838.00px;top:389.00px;width:1.30px;height:12.00px;background:#0ac35a;"></div>
<div class="a" style="left:839.00px;top:389.00px;width:1.20px;height:12.00px;background:#1a9be8;"></div>
<div class="a" style="left:20.00px;top:406.00px;width:826.00px;height:21.00px;background:#f5f5f5;"></div>
<div class="a" style="left:43.00px;top:405.00px;line-height:21px;color:#303942;letter-spacing:0.214px;">address-list.js</div>
<div class="a" style="left:221.00px;top:405.00px;line-height:21px;color:#303942;letter-spacing:0.600px;">200</div>
<div class="a" style="left:284.00px;top:405.00px;line-height:21px;color:#303942;letter-spacing:0.629px;">http/1.1</div>
<div class="a" style="left:348.00px;top:405.00px;line-height:21px;color:#303942;letter-spacing:0.460px;">script</div>
<div class="a" style="left:394.50px;top:405.00px;line-height:21px;color:#303942;letter-spacing:0.329px;text-decoration:underline;">require.js:1895</div>
<div class="a" style="right:304.00px;top:405.00px;line-height:21px;color:#303942;letter-spacing:0.250px;">569 B</div>
<div class="a" style="right:223.00px;top:405.00px;line-height:21px;color:#303942;letter-spacing:0.420px;">153 ms</div>
<div class="a" style="left:838.00px;top:410.00px;width:2.20px;height:12.00px;background:#0ac35a;"></div>
<div class="a" style="left:840.20px;top:410.00px;width:1.20px;height:12.00px;background:#1a9be8;"></div>
<div class="a" style="left:20.00px;top:427.00px;width:826.00px;height:21.00px;background:#fff;"></div>
<div class="a" style="left:43.00px;top:426.00px;line-height:21px;color:#303942;letter-spacing:0.192px;">amazon-core.js</div>
<div class="a" style="left:221.00px;top:426.00px;line-height:21px;color:#303942;letter-spacing:0.600px;">200</div>
<div class="a" style="left:284.00px;top:426.00px;line-height:21px;color:#303942;letter-spacing:0.629px;">http/1.1</div>
<div class="a" style="left:348.00px;top:426.00px;line-height:21px;color:#303942;letter-spacing:0.460px;">script</div>
<div class="a" style="left:394.50px;top:426.00px;line-height:21px;color:#303942;letter-spacing:0.329px;text-decoration:underline;">require.js:1895</div>
<div class="a" style="right:304.00px;top:426.00px;line-height:21px;color:#303942;letter-spacing:0.000px;">1.9 KB</div>
<div class="a" style="right:223.00px;top:426.00px;line-height:21px;color:#303942;letter-spacing:0.420px;">158 ms</div>
<div class="a" style="left:839.00px;top:431.00px;width:1.30px;height:12.00px;background:#0ac35a;"></div>
<div class="a" style="left:840.00px;top:431.00px;width:1.20px;height:12.00px;background:#1a9be8;"></div>
<div class="a" style="left:20.00px;top:448.00px;width:826.00px;height:21.00px;background:#f5f5f5;"></div>
<div class="a" style="left:43.00px;top:447.00px;line-height:21px;color:#303942;letter-spacing:0.313px;">query-builder.js</div>
<div class="a" style="left:221.00px;top:447.00px;line-height:21px;color:#303942;letter-spacing:0.600px;">200</div>
<div class="a" style="left:284.00px;top:447.00px;line-height:21px;color:#303942;letter-spacing:0.629px;">http/1.1</div>
<div class="a" style="left:348.00px;top:447.00px;line-height:21px;color:#303942;letter-spacing:0.460px;">script</div>
<div class="a" style="left:394.50px;top:447.00px;line-height:21px;color:#303942;letter-spacing:0.329px;text-decoration:underline;">require.js:1895</div>
<div class="a" style="right:304.00px;top:447.00px;line-height:21px;color:#303942;letter-spacing:0.250px;">713 B</div>
<div class="a" style="right:223.00px;top:447.00px;line-height:21px;color:#303942;letter-spacing:0.420px;">124 ms</div>
<div class="a" style="left:838.90px;top:452.00px;width:1.30px;height:12.00px;background:#0ac35a;"></div>
<div class="a" style="left:839.90px;top:452.00px;width:1.20px;height:12.00px;background:#1a9be8;"></div>
<div class="a" style="left:20.00px;top:469.00px;width:826.00px;height:21.00px;background:#fff;"></div>
<div class="a" style="left:43.00px;top:468.00px;line-height:21px;color:#303942;letter-spacing:0.233px;">refresh.js</div>
<div class="a" style="left:221.00px;top:468.00px;line-height:21px;color:#303942;letter-spacing:0.600px;">200</div>
<div class="a" style="left:284.00px;top:468.00px;line-height:21px;color:#303942;letter-spacing:0.629px;">http/1.1</div>
<div class="a" style="left:348.00px;top:468.00px;line-height:21px;color:#303942;letter-spacing:0.460px;">script</div>
<div class="a" style="left:394.50px;top:468.00px;line-height:21px;color:#303942;letter-spacing:0.329px;text-decoration:underline;">require.js:1895</div>
<div class="a" style="right:304.00px;top:468.00px;line-height:21px;color:#303942;letter-spacing:0.250px;">628 B</div>
<div class="a" style="right:223.00px;top:468.00px;line-height:21px;color:#303942;letter-spacing:0.420px;">145 ms</div>
<div class="a" style="left:839.00px;top:473.00px;width:1.30px;height:12.00px;background:#0ac35a;"></div>
<div class="a" style="left:839.60px;top:473.00px;width:1.20px;height:12.00px;background:#1a9be8;"></div>
<div class="a" style="left:20.00px;top:490.00px;width:826.00px;height:21.00px;background:#f5f5f5;"></div>
<div class="a" style="left:43.00px;top:489.00px;line-height:21px;color:#303942;letter-spacing:0.454px;">authentication-popup.html</div>
<div class="a" style="left:221.00px;top:489.00px;line-height:21px;color:#303942;letter-spacing:0.600px;">200</div>
<div class="a" style="left:284.00px;top:489.00px;line-height:21px;color:#303942;letter-spacing:0.629px;">http/1.1</div>
<div class="a" style="left:348.00px;top:489.00px;line-height:21px;color:#303942;letter-spacing:0.800px;">xhr</div>
<div class="a" style="left:394.50px;top:489.00px;line-height:21px;color:#303942;letter-spacing:0.470px;text-decoration:underline;">text.js:137</div>
<div class="a" style="right:304.00px;top:489.00px;line-height:21px;color:#303942;letter-spacing:0.000px;">1.4 KB</div>
<div class="a" style="right:223.00px;top:489.00px;line-height:21px;color:#303942;letter-spacing:0.420px;">195 ms</div>
<div class="a" style="left:840.00px;top:494.00px;width:1.30px;height:12.00px;background:#0ac35a;"></div>
<div class="a" style="left:841.00px;top:494.00px;width:1.20px;height:12.00px;background:#1a9be8;"></div>
<div class="a" style="left:20.00px;top:511.00px;width:826.00px;height:21.00px;background:#fff;"></div>
<div class="a" style="left:43.00px;top:510.00px;line-height:21px;color:#303942;letter-spacing:0.175px;">customer-addresses.js</div>
<div class="a" style="left:221.00px;top:510.00px;line-height:21px;color:#303942;letter-spacing:0.600px;">200</div>
<div class="a" style="left:284.00px;top:510.00px;line-height:21px;color:#303942;letter-spacing:0.629px;">http/1.1</div>
<div class="a" style="left:348.00px;top:510.00px;line-height:21px;color:#303942;letter-spacing:0.460px;">script</div>
<div class="a" style="left:394.50px;top:510.00px;line-height:21px;color:#303942;letter-spacing:0.329px;text-decoration:underline;">require.js:1895</div>
<div class="a" style="right:304.00px;top:510.00px;line-height:21px;color:#303942;letter-spacing:0.250px;">724 B</div>
<div class="a" style="right:223.00px;top:510.00px;line-height:21px;color:#303942;letter-spacing:0.420px;">100 ms</div>
<div class="a" style="left:839.70px;top:515.00px;width:1.30px;height:12.00px;background:#0ac35a;"></div>
<div class="a" style="left:840.70px;top:515.00px;width:1.20px;height:12.00px;background:#1a9be8;"></div>
<div class="a" style="left:20.00px;top:532.00px;width:826.00px;height:21.00px;background:#f5f5f5;"></div>
<div class="a" style="left:43.00px;top:531.00px;line-height:21px;color:#303942;letter-spacing:0.257px;">amazon-widgets-loader.js</div>
<div class="a" style="left:221.00px;top:531.00px;line-height:21px;color:#303942;letter-spacing:0.600px;">200</div>
<div class="a" style="left:284.00px;top:531.00px;line-height:21px;color:#303942;letter-spacing:0.629px;">http/1.1</div>
<div class="a" style="left:348.00px;top:531.00px;line-height:21px;color:#303942;letter-spacing:0.460px;">script</div>
<div class="a" style="left:394.50px;top:531.00px;line-height:21px;color:#303942;letter-spacing:0.329px;text-decoration:underline;">require.js:1895</div>
<div class="a" style="right:304.00px;top:531.00px;line-height:21px;color:#303942;letter-spacing:0.250px;">822 B</div>
<div class="a" style="right:223.00px;top:531.00px;line-height:21px;color:#303942;letter-spacing:0.400px;">97 ms</div>
<div class="a" style="left:840.00px;top:536.00px;width:1.30px;height:12.00px;background:#0ac35a;"></div>
<div class="a" style="left:841.00px;top:536.00px;width:1.20px;height:12.00px;background:#1a9be8;"></div>
<div class="a" style="left:20.00px;top:553.00px;width:826.00px;height:21.00px;background:#fff;"></div>
<div class="a" style="left:43.00px;top:552.00px;line-height:21px;color:#303942;letter-spacing:0.379px;">bluebird.min.js</div>
<div class="a" style="left:221.00px;top:552.00px;line-height:21px;color:#303942;letter-spacing:0.600px;">200</div>
<div class="a" style="left:284.00px;top:552.00px;line-height:21px;color:#303942;letter-spacing:0.629px;">http/1.1</div>
<div class="a" style="left:348.00px;top:552.00px;line-height:21px;color:#303942;letter-spacing:0.460px;">script</div>
<div class="a" style="left:394.50px;top:552.00px;line-height:21px;color:#303942;letter-spacing:0.329px;text-decoration:underline;">require.js:1895</div>
<div class="a" style="right:304.00px;top:552.00px;line-height:21px;color:#303942;letter-spacing:0.050px;">21.8 KB</div>
<div class="a" style="right:223.00px;top:552.00px;line-height:21px;color:#303942;letter-spacing:0.420px;">179 ms</div>
<div class="a" style="left:839.60px;top:557.00px;width:2.40px;height:12.00px;background:#0ac35a;"></div>
<div class="a" style="left:842.00px;top:557.00px;width:1.20px;height:12.00px;background:#1a9be8;"></div>
<div class="a" style="left:20.00px;top:574.00px;width:826.00px;height:21.00px;background:#f5f5f5;"></div>
<div class="a" style="left:43.00px;top:573.00px;line-height:21px;color:#303942;letter-spacing:0.325px;">messages.html</div>
<div class="a" style="left:221.00px;top:573.00px;line-height:21px;color:#303942;letter-spacing:0.600px;">200</div>
<div class="a" style="left:284.00px;top:573.00px;line-height:21px;color:#303942;letter-spacing:0.629px;">http/1.1</div>
<div class="a" style="left:348.00px;top:573.00px;line-height:21px;color:#303942;letter-spacing:0.800px;">xhr</div>
<div class="a" style="left:394.50px;top:573.00px;line-height:21px;color:#303942;letter-spacing:0.470px;text-decoration:underline;">text.js:137</div>
<div class="a" style="right:304.00px;top:573.00px;line-height:21px;color:#303942;letter-spacing:0.250px;">647 B</div>
<div class="a" style="right:223.00px;top:573.00px;line-height:21px;color:#303942;letter-spacing:0.420px;">148 ms</div>
<div class="a" style="left:841.00px;top:578.00px;width:1.90px;height:12.00px;background:#0ac35a;"></div>
<div class="a" style="left:842.90px;top:578.00px;width:1.20px;height:12.00px;background:#1a9be8;"></div>
<div class="a" style="left:20.00px;top:595.00px;width:826.00px;height:21.00px;background:#fff;"></div>
<div class="a" style="left:43.00px;top:594.00px;line-height:21px;color:#303942;letter-spacing:0.354px;">reCaptcha.html</div>
<div class="a" style="left:221.00px;top:594.00px;line-height:21px;color:#303942;letter-spacing:0.600px;">200</div>
<div class="a" style="left:284.00px;top:594.00px;line-height:21px;color:#303942;letter-spacing:0.629px;">http/1.1</div>
<div class="a" style="left:348.00px;top:594.00px;line-height:21px;color:#303942;letter-spacing:0.800px;">xhr</div>
<div class="a" style="left:394.50px;top:594.00px;line-height:21px;color:#303942;letter-spacing:0.470px;text-decoration:underline;">text.js:137</div>
<div class="a" style="right:304.00px;top:594.00px;line-height:21px;color:#303942;letter-spacing:0.250px;">854 B</div>
<div class="a" style="right:223.00px;top:594.00px;line-height:21px;color:#303942;letter-spacing:0.600px;">110 ms</div>
<div class="a" style="left:841.00px;top:599.00px;width:1.30px;height:12.00px;background:#1a9be8;"></div>
<div class="a" style="left:842.00px;top:599.00px;width:1.20px;height:12.00px;background:#1a9be8;"></div>
<div class="a" style="left:20.00px;top:616.00px;width:826.00px;height:21.00px;background:#f5f5f5;"></div>
<div class="a" style="left:43.00px;top:615.00px;line-height:21px;color:#303942;letter-spacing:0.482px;">captcha.html</div>
<div class="a" style="left:221.00px;top:615.00px;line-height:21px;color:#303942;letter-spacing:0.600px;">200</div>
<div class="a" style="left:284.00px;top:615.00px;line-height:21px;color:#303942;letter-spacing:0.629px;">http/1.1</div>
<div class="a" style="left:348.00px;top:615.00px;line-height:21px;color:#303942;letter-spacing:0.800px;">xhr</div>
<div class="a" style="left:394.50px;top:615.00px;line-height:21px;color:#303942;letter-spacing:0.470px;text-decoration:underline;">text.js:137</div>
<div class="a" style="right:304.00px;top:615.00px;line-height:21px;color:#303942;letter-spacing:0.250px;">988 B</div>
<div class="a" style="right:223.00px;top:615.00px;line-height:21px;color:#303942;letter-spacing:0.420px;">145 ms</div>
<div class="a" style="left:841.70px;top:620.00px;width:1.30px;height:12.00px;background:#0ac35a;"></div>
<div class="a" style="left:842.90px;top:620.00px;width:1.20px;height:12.00px;background:#1a9be8;"></div>
<div class="a" style="left:20.00px;top:637.00px;width:826.00px;height:21.00px;background:#fff;"></div>
<div class="a" style="left:43.00px;top:636.00px;line-height:21px;color:#303942;letter-spacing:0.144px;">address.js</div>
<div class="a" style="left:221.00px;top:636.00px;line-height:21px;color:#303942;letter-spacing:0.600px;">200</div>
<div class="a" style="left:284.00px;top:636.00px;line-height:21px;color:#303942;letter-spacing:0.629px;">http/1.1</div>
<div class="a" style="left:348.00px;top:636.00px;line-height:21px;color:#303942;letter-spacing:0.460px;">script</div>
<div class="a" style="left:394.50px;top:636.00px;line-height:21px;color:#303942;letter-spacing:0.329px;text-decoration:underline;">require.js:1895</div>
<div class="a" style="right:304.00px;top:636.00px;line-height:21px;color:#303942;letter-spacing:0.000px;">1.0 KB</div>
<div class="a" style="right:223.00px;top:636.00px;line-height:21px;color:#303942;letter-spacing:0.420px;">144 ms</div>
<div class="a" style="left:841.70px;top:641.00px;width:1.30px;height:12.00px;background:#0ac35a;"></div>
<div class="a" style="left:842.90px;top:641.00px;width:1.20px;height:12.00px;background:#1a9be8;"></div>
<div class="a" style="left:20.00px;top:658.00px;width:826.00px;height:21.00px;background:#f5f5f5;"></div>
<div class="a" style="left:43.00px;top:657.00px;line-height:21px;color:#303942;letter-spacing:0.450px;">collection.html</div>
<div class="a" style="left:221.00px;top:657.00px;line-height:21px;color:#303942;letter-spacing:0.600px;">200</div>
<div class="a" style="left:284.00px;top:657.00px;line-height:21px;color:#303942;letter-spacing:0.629px;">http/1.1</div>
<div class="a" style="left:348.00px;top:657.00px;line-height:21px;color:#303942;letter-spacing:0.800px;">xhr</div>
<div class="a" style="left:394.50px;top:657.00px;line-height:21px;color:#303942;letter-spacing:0.470px;text-decoration:underline;">text.js:137</div>
<div class="a" style="right:304.00px;top:657.00px;line-height:21px;color:#303942;letter-spacing:0.250px;">503 B</div>
<div class="a" style="right:223.00px;top:657.00px;line-height:21px;color:#303942;letter-spacing:0.400px;">77 ms</div>
<div class="a" style="left:842.70px;top:662.00px;width:1.30px;height:12.00px;background:#0ac35a;"></div>
<div class="a" style="left:843.70px;top:662.00px;width:1.20px;height:12.00px;background:#1a9be8;"></div>
<div class="a" style="left:216.00px;top:206.00px;width:1.00px;height:473.00px;background:#dedede;"></div>
<div class="a" style="left:279.00px;top:206.00px;width:1.00px;height:473.00px;background:#dedede;"></div>
<div class="a" style="left:343.00px;top:206.00px;width:1.00px;height:473.00px;background:#dedede;"></div>
<div class="a" style="left:389.00px;top:206.00px;width:1.00px;height:473.00px;background:#dedede;"></div>
<div class="a" style="left:503.00px;top:206.00px;width:1.00px;height:473.00px;background:#dedede;"></div>
<div class="a" style="left:565.00px;top:206.00px;width:1.00px;height:473.00px;background:#dedede;"></div>
<div class="a" style="left:646.00px;top:206.00px;width:1.50px;height:473.00px;background:#d8d8d8;"></div>
<div class="a" style="left:737.00px;top:207.00px;width:1.00px;height:472.00px;background:#e0e0e0;"></div>
<div class="a" style="left:794.30px;top:207.00px;width:2.00px;height:472.00px;background:#76a7e4;"></div>
<div class="a" style="left:821.00px;top:207.00px;width:2.00px;height:472.00px;background:#d98686;"></div>
<div class="a" style="left:828.00px;top:207.00px;width:1.00px;height:472.00px;background:#e0e0e0;"></div>
<svg class="a" style="left:0;top:0" width="866" height="726" viewBox="0 0 866 726"><path d="M33.6 38.5H30.5V27.5H41.5V31" fill="none" stroke="#6e6e6e" stroke-width="1.1" stroke-linejoin="round"/><path d="M35.2 32L42.6 34.6L39.6 35.8L37.4 39.4Z" fill="#6e6e6e"/><path d="M39.2 36.2L42.5 39.5" stroke="#6e6e6e" stroke-width="1.6"/><rect x="59.7" y="25.7" width="10.6" height="14.6" rx="0.6" fill="none" stroke="#6e6e6e" stroke-width="1.1"/><rect x="56.9" y="31" width="5.3" height="9.2" fill="#f3f3f3" stroke="#6e6e6e" stroke-width="1.2"/><rect x="56.3" y="39" width="6.5" height="1.8" fill="#6e6e6e"/><path d="M730.8 29.4L734.2 32.9L730.8 36.4M734.9 29.4L738.3 32.9L734.9 36.4" fill="none" stroke="#5a5a5a" stroke-width="1.6"/><path d="M788 27.6L792.8 36.5H783.2Z" fill="#f0b400" stroke="#f0b400" stroke-width="1.2" stroke-linejoin="round"/><rect x="787.1" y="30.2" width="1.8" height="3.3" fill="#fff"/><rect x="787.1" y="34.4" width="1.8" height="1.4" fill="#fff"/><circle cx="830.3" cy="28.6" r="1.5" fill="#6e6e6e"/><circle cx="830.3" cy="33.4" r="1.5" fill="#6e6e6e"/><circle cx="830.3" cy="38.3" r="1.5" fill="#6e6e6e"/><circle cx="35.9" cy="59.9" r="7.6" fill="rgba(230,40,40,0.18)"/><circle cx="35.9" cy="59.9" r="6.1" fill="#dd0000"/><circle cx="64.4" cy="60.3" r="5.6" fill="none" stroke="#6e6e6e" stroke-width="1.5"/><path d="M60.5 56.4L68.3 64.2" stroke="#6e6e6e" stroke-width="1.6"/><rect x="95.1" y="56" width="9.8" height="8" fill="#6e6e6e"/><path d="M104.6 59.8L108.1 56V64L104.6 61Z" fill="#6e6e6e"/><path d="M122.8 55.9H135.1L130.7 60.6V65.8H127.3V60.6Z" fill="#8fb6ee" stroke="#1a73e8" stroke-width="1.6" stroke-linejoin="round"/><path d="M124.6 57.2H133.3L131.4 59.2H126.5Z" fill="#f3f3f3"/><circle cx="155.1" cy="58.8" r="4.4" fill="none" stroke="#6e6e6e" stroke-width="1.5"/><path d="M158.4 62.4L163.4 67.2" stroke="#6e6e6e" stroke-width="1.8"/><rect x="229" y="55" width="4" height="3.8" fill="#6e6e6e"/><rect x="234" y="55" width="9" height="1.9" fill="#6e6e6e"/><rect x="234" y="58" width="9" height="1" fill="#6e6e6e"/><rect x="229" y="61" width="4" height="3.8" fill="#6e6e6e"/><rect x="234" y="61" width="9" height="1.9" fill="#6e6e6e"/><rect x="234" y="64" width="9" height="1" fill="#6e6e6e"/><rect x="256" y="55" width="6.2" height="1.9" fill="#0b62de"/><rect x="262.8" y="55" width="10.2" height="1.9" fill="#c3d7f4"/><rect x="259" y="58" width="6" height="1.9" fill="#0b62de"/><rect x="264" y="61.1" width="6" height="1.8" fill="#0b62de"/><rect x="266" y="64.1" width="6" height="1.8" fill="#0b62de"/><path d="M522.6999999999999 59.8L524.5 62.2L528.8 56.6" fill="none" stroke="#333" stroke-width="2"/><path d="M805 56.6H811.8L808.4 62.5Z" fill="#6e6e6e"/><rect x="26.5" y="199.5" width="11" height="14" fill="#fff" stroke="#8f8f8f" stroke-width="1"/><path d="M28.2 202.4h1.7M31.2 202.4h4.7M28.2 204.4h3.7M33.1 204.4h2.8M28.2 206.4h1.7M31.2 206.4h4.7M28.2 208.4h4.6M34.1 208.4h1.8M28.2 210.4h2.6M32 210.4h0.9" stroke="#d6d6d6" stroke-width="1.1"/><path d="M835.5 203.5H833.0V209.5H835.5" fill="none" stroke="#c8c8c8" stroke-width="1"/><rect x="26.5" y="220.5" width="11" height="14" fill="#fff" stroke="#8f8f8f" stroke-width="1"/><path d="M28.2 223.4h1.7M31.2 223.4h4.7M28.2 225.4h3.7M33.1 225.4h2.8M28.2 227.4h1.7M31.2 227.4h4.7M28.2 229.4h4.6M34.1 229.4h1.8M28.2 231.4h2.6M32 231.4h0.9" stroke="#d6d6d6" stroke-width="1.1"/><path d="M836.4 224.5H833.9V230.5H836.4" fill="none" stroke="#c8c8c8" stroke-width="1"/><rect x="26.5" y="241.5" width="11" height="14" fill="#fff" stroke="#8f8f8f" stroke-width="1"/><path d="M28.2 244.4h1.7M31.2 244.4h4.7M28.2 246.4h3.7M33.1 246.4h2.8M28.2 248.4h1.7M31.2 248.4h4.7M28.2 250.4h4.6M34.1 250.4h1.8M28.2 252.4h2.6M32 252.4h0.9" stroke="#d6d6d6" stroke-width="1.1"/><path d="M836.4 245.5H833.9V251.5H836.4" fill="none" stroke="#c8c8c8" stroke-width="1"/><rect x="26.5" y="262.5" width="11" height="14" fill="#fff" stroke="#8f8f8f" stroke-width="1"/><path d="M28.2 265.4h1.7M31.2 265.4h4.7M28.2 267.4h3.7M33.1 267.4h2.8M28.2 269.4h1.7M31.2 269.4h4.7M28.2 271.4h4.6M34.1 271.4h1.8M28.2 273.4h2.6M32 273.4h0.9" stroke="#d6d6d6" stroke-width="1.1"/><path d="M836.4 266.5H833.9V272.5H836.4" fill="none" stroke="#c8c8c8" stroke-width="1"/><rect x="26.5" y="283.5" width="11" height="14" fill="#fff" stroke="#8f8f8f" stroke-width="1"/><path d="M28.2 286.4h1.7M31.2 286.4h4.7M28.2 288.4h3.7M33.1 288.4h2.8M28.2 290.4h1.7M31.2 290.4h4.7M28.2 292.4h4.6M34.1 292.4h1.8M28.2 294.4h2.6M32 294.4h0.9" stroke="#d6d6d6" stroke-width="1.1"/><path d="M836.4 287.5H833.9V293.5H836.4" fill="none" stroke="#c8c8c8" stroke-width="1"/><rect x="26.5" y="304.5" width="11" height="14" fill="#fff" stroke="#8f8f8f" stroke-width="1"/><path d="M28.2 307.4h1.7M31.2 307.4h4.7M28.2 309.4h3.7M33.1 309.4h2.8M28.2 311.4h1.7M31.2 311.4h4.7M28.2 313.4h4.6M34.1 313.4h1.8M28.2 315.4h2.6M32 315.4h0.9" stroke="#d6d6d6" stroke-width="1.1"/><path d="M837.3 308.5H834.8V314.5H837.3" fill="none" stroke="#c8c8c8" stroke-width="1"/><rect x="26.5" y="325.5" width="11" height="14" fill="#fff" stroke="#8f8f8f" stroke-width="1"/><path d="M28.2 328.4h1.7M31.2 328.4h4.7M28.2 330.4h3.7M33.1 330.4h2.8M28.2 332.4h1.7M31.2 332.4h4.7M28.2 334.4h4.6M34.1 334.4h1.8M28.2 336.4h2.6M32 336.4h0.9" stroke="#d6d6d6" stroke-width="1.1"/><path d="M837.3 329.5H834.8V335.5H837.3" fill="none" stroke="#c8c8c8" stroke-width="1"/><rect x="26.5" y="346.5" width="11" height="14" fill="#fff" stroke="#8f8f8f" stroke-width="1"/><path d="M28.2 349.4h1.7M31.2 349.4h4.7M28.2 351.4h3.7M33.1 351.4h2.8M28.2 353.4h1.7M31.2 353.4h4.7M28.2 355.4h4.6M34.1 355.4h1.8M28.2 357.4h2.6M32 357.4h0.9" stroke="#d6d6d6" stroke-width="1.1"/><path d="M837.3 350.5H834.8V356.5H837.3" fill="none" stroke="#c8c8c8" stroke-width="1"/><rect x="26.5" y="367.5" width="11" height="14" fill="#fff" stroke="#8f8f8f" stroke-width="1"/><path d="M28.2 370.4h1.7M31.2 370.4h4.7M28.2 372.4h3.7M33.1 372.4h2.8M28.2 374.4h1.7M31.2 374.4h4.7M28.2 376.4h4.6M34.1 376.4h1.8M28.2 378.4h2.6M32 378.4h0.9" stroke="#d6d6d6" stroke-width="1.1"/><path d="M837.3 371.5H834.8V377.5H837.3" fill="none" stroke="#c8c8c8" stroke-width="1"/><rect x="26.5" y="388.5" width="11" height="14" fill="#fff" stroke="#8f8f8f" stroke-width="1"/><path d="M28.2 391.4h1.7M31.2 391.4h4.7M28.2 393.4h3.7M33.1 393.4h2.8M28.2 395.4h1.7M31.2 395.4h4.7M28.2 397.4h4.6M34.1 397.4h1.8M28.2 399.4h2.6M32 399.4h0.9" stroke="#d6d6d6" stroke-width="1.1"/><path d="M839.3 392.5H836.8V398.5H839.3" fill="none" stroke="#c8c8c8" stroke-width="1"/><rect x="26.5" y="409.5" width="11" height="14" fill="#fff" stroke="#8f8f8f" stroke-width="1"/><path d="M28.2 412.4h1.7M31.2 412.4h4.7M28.2 414.4h3.7M33.1 414.4h2.8M28.2 416.4h1.7M31.2 416.4h4.7M28.2 418.4h4.6M34.1 418.4h1.8M28.2 420.4h2.6M32 420.4h0.9" stroke="#d6d6d6" stroke-width="1.1"/><path d="M839.3 413.5H836.8V419.5H839.3" fill="none" stroke="#c8c8c8" stroke-width="1"/><rect x="26.5" y="430.5" width="11" height="14" fill="#fff" stroke="#8f8f8f" stroke-width="1"/><path d="M28.2 433.4h1.7M31.2 433.4h4.7M28.2 435.4h3.7M33.1 435.4h2.8M28.2 437.4h1.7M31.2 437.4h4.7M28.2 439.4h4.6M34.1 439.4h1.8M28.2 441.4h2.6M32 441.4h0.9" stroke="#d6d6d6" stroke-width="1.1"/><path d="M839.3 434.5H836.8V440.5H839.3" fill="none" stroke="#c8c8c8" stroke-width="1"/><rect x="26.5" y="451.5" width="11" height="14" fill="#fff" stroke="#8f8f8f" stroke-width="1"/><path d="M28.2 454.4h1.7M31.2 454.4h4.7M28.2 456.4h3.7M33.1 456.4h2.8M28.2 458.4h1.7M31.2 458.4h4.7M28.2 460.4h4.6M34.1 460.4h1.8M28.2 462.4h2.6M32 462.4h0.9" stroke="#d6d6d6" stroke-width="1.1"/><path d="M840.3 455.5H837.8V461.5H840.3" fill="none" stroke="#c8c8c8" stroke-width="1"/><rect x="26.5" y="472.5" width="11" height="14" fill="#fff" stroke="#8f8f8f" stroke-width="1"/><path d="M28.2 475.4h1.7M31.2 475.4h4.7M28.2 477.4h3.7M33.1 477.4h2.8M28.2 479.4h1.7M31.2 479.4h4.7M28.2 481.4h4.6M34.1 481.4h1.8M28.2 483.4h2.6M32 483.4h0.9" stroke="#d6d6d6" stroke-width="1.1"/><path d="M840.3 476.5H837.8V482.5H840.3" fill="none" stroke="#c8c8c8" stroke-width="1"/><rect x="26.5" y="493.5" width="11" height="14" fill="#fff" stroke="#8f8f8f" stroke-width="1"/><path d="M841.4 497.5H838.9V503.5H841.4" fill="none" stroke="#c8c8c8" stroke-width="1"/><rect x="26.5" y="514.5" width="11" height="14" fill="#fff" stroke="#8f8f8f" stroke-width="1"/><path d="M28.2 517.4h1.7M31.2 517.4h4.7M28.2 519.4h3.7M33.1 519.4h2.8M28.2 521.4h1.7M31.2 521.4h4.7M28.2 523.4h4.6M34.1 523.4h1.8M28.2 525.4h2.6M32 525.4h0.9" stroke="#d6d6d6" stroke-width="1.1"/><rect x="26.5" y="535.5" width="11" height="14" fill="#fff" stroke="#8f8f8f" stroke-width="1"/><path d="M28.2 538.4h1.7M31.2 538.4h4.7M28.2 540.4h3.7M33.1 540.4h2.8M28.2 542.4h1.7M31.2 542.4h4.7M28.2 544.4h4.6M34.1 544.4h1.8M28.2 546.4h2.6M32 546.4h0.9" stroke="#d6d6d6" stroke-width="1.1"/><rect x="26.5" y="556.5" width="11" height="14" fill="#fff" stroke="#8f8f8f" stroke-width="1"/><path d="M28.2 559.4h1.7M31.2 559.4h4.7M28.2 561.4h3.7M33.1 561.4h2.8M28.2 563.4h1.7M31.2 563.4h4.7M28.2 565.4h4.6M34.1 565.4h1.8M28.2 567.4h2.6M32 567.4h0.9" stroke="#d6d6d6" stroke-width="1.1"/><rect x="26.5" y="577.5" width="11" height="14" fill="#fff" stroke="#8f8f8f" stroke-width="1"/><rect x="26.5" y="598.5" width="11" height="14" fill="#fff" stroke="#8f8f8f" stroke-width="1"/><rect x="26.5" y="619.5" width="11" height="14" fill="#fff" stroke="#8f8f8f" stroke-width="1"/><rect x="26.5" y="640.5" width="11" height="14" fill="#fff" stroke="#8f8f8f" stroke-width="1"/><path d="M28.2 643.4h1.7M31.2 643.4h4.7M28.2 645.4h3.7M33.1 645.4h2.8M28.2 647.4h1.7M31.2 647.4h4.7M28.2 649.4h4.6M34.1 649.4h1.8M28.2 651.4h2.6M32 651.4h0.9" stroke="#d6d6d6" stroke-width="1.1"/><rect x="26.5" y="661.5" width="11" height="14" fill="#fff" stroke="#8f8f8f" stroke-width="1"/></svg>
<div class="a" style="left:20.00px;top:180.00px;width:826.00px;height:26.00px;background:#f3f3f3;"></div>
<div class="a" style="left:20.00px;top:206.00px;width:826.00px;height:1.00px;background:#cdcdcd;"></div>
<div class="a" style="left:24.00px;top:180.00px;line-height:26px;color:#303942;letter-spacing:0.233px;">Name</div>
<div class="a" style="left:221.00px;top:180.00px;line-height:26px;color:#303942;letter-spacing:0.260px;">Status</div>
<div class="a" style="left:284.00px;top:180.00px;line-height:26px;color:#303942;letter-spacing:0.100px;">Protocol</div>
<div class="a" style="left:348.40px;top:180.00px;line-height:26px;color:#303942;letter-spacing:-0.167px;">Type</div>
<div class="a" style="left:393.50px;top:180.00px;line-height:26px;color:#303942;letter-spacing:0.537px;">Initiator</div>
<div class="a" style="left:508.00px;top:180.00px;line-height:26px;color:#303942;letter-spacing:-0.233px;">Size</div>
<div class="a" style="left:571.00px;top:180.00px;line-height:26px;color:#303942;letter-spacing:0.367px;">Time</div>
<div class="a" style="left:651.30px;top:180.00px;line-height:26px;color:#303942;letter-spacing:0.363px;">Waterfall</div>
<div class="a" style="left:216.00px;top:180.00px;width:1.00px;height:26.00px;background:#cdcdcd;"></div>
<div class="a" style="left:279.00px;top:180.00px;width:1.00px;height:26.00px;background:#cdcdcd;"></div>
<div class="a" style="left:343.00px;top:180.00px;width:1.00px;height:26.00px;background:#cdcdcd;"></div>
<div class="a" style="left:389.00px;top:180.00px;width:1.00px;height:26.00px;background:#cdcdcd;"></div>
<div class="a" style="left:503.00px;top:180.00px;width:1.00px;height:26.00px;background:#cdcdcd;"></div>
<div class="a" style="left:565.00px;top:180.00px;width:1.00px;height:26.00px;background:#cdcdcd;"></div>
<div class="a" style="left:646.00px;top:180.00px;width:1.00px;height:26.00px;background:#cdcdcd;"></div>
<div class="a" style="left:20.00px;top:679.00px;width:826.00px;height:27.00px;background:#f3f3f3;"></div>
<div class="a" style="left:20.00px;top:679.00px;width:826.00px;height:1.00px;background:#cdcdcd;"></div>
<div class="a" style="left:30.10px;top:680.00px;line-height:26px;color:#5a5a5a;letter-spacing:0.309px;">200 requests</div>
<div class="a" style="left:126.50px;top:680.00px;line-height:26px;color:#5a5a5a;letter-spacing:0.259px;">983 KB transferred</div>
<div class="a" style="left:259.00px;top:680.00px;line-height:26px;color:#5a5a5a;letter-spacing:0.107px;">3.1 MB resources</div>
<div class="a" style="left:381.50px;top:680.00px;line-height:26px;color:#5a5a5a;letter-spacing:0.136px;">Finish: 21.93 s</div>
<div class="a" style="left:488.00px;top:680.00px;line-height:26px;color:#1a6fd0;letter-spacing:0.154px;">DOMContentLoaded: 16.25 s</div>
<div class="a" style="left:679.70px;top:680.00px;line-height:26px;color:#b3261e;letter-spacing:0.192px;">Load: 19.27 s</div>
<div class="a" style="left:118.00px;top:686.00px;width:1.00px;height:15.00px;background:#cdcdcd;"></div>
<div class="a" style="left:250.00px;top:686.00px;width:1.00px;height:15.00px;background:#cdcdcd;"></div>
<div class="a" style="left:373.00px;top:686.00px;width:1.00px;height:15.00px;background:#cdcdcd;"></div>
<div class="a" style="left:478.00px;top:686.00px;width:1.00px;height:15.00px;background:#cdcdcd;"></div>
<div class="a" style="left:670.00px;top:686.00px;width:1.00px;height:15.00px;background:#cdcdcd;"></div>
<svg id="ov" width="866" height="726" viewBox="0 0 866 726"><path d="M832 189.3L836.2 195.8H827.8Z" fill="#6e6e6e"/></svg>
</div></body></html>
